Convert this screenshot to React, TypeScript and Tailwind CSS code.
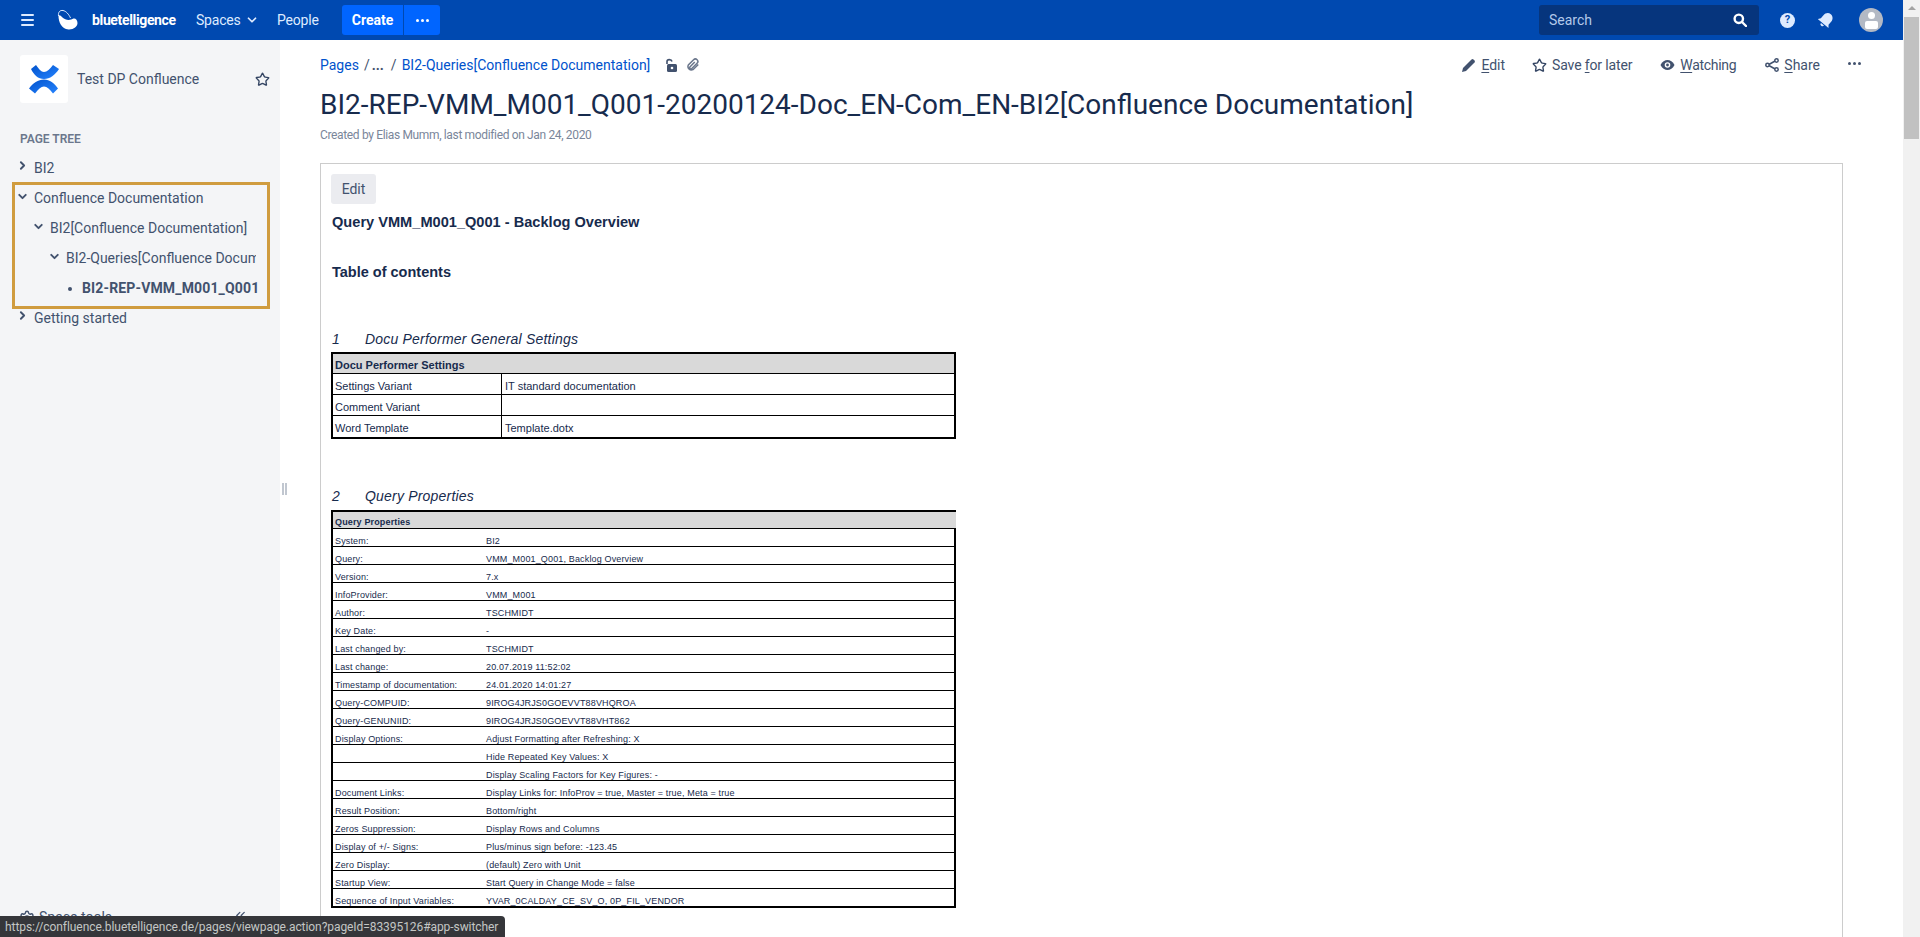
import React from "react";
import { ChevronRight, ChevronDown, ChevronsLeft, Star, Settings } from "lucide-react";

const t2: [string, string][] = [
  ["System:", "BI2"],
  ["Query:", "VMM_M001_Q001, Backlog Overview"],
  ["Version:", "7.x"],
  ["InfoProvider:", "VMM_M001"],
  ["Author:", "TSCHMIDT"],
  ["Key Date:", "-"],
  ["Last changed by:", "TSCHMIDT"],
  ["Last change:", "20.07.2019 11:52:02"],
  ["Timestamp of documentation:", "24.01.2020 14:01:27"],
  ["Query-COMPUID:", "9IROG4JRJS0GOEVVT88VHQROA"],
  ["Query-GENUNIID:", "9IROG4JRJS0GOEVVT88VHT862"],
  ["Display Options:", "Adjust Formatting after Refreshing: X"],
  ["", "Hide Repeated Key Values: X"],
  ["", "Display Scaling Factors for Key Figures: -"],
  ["Document Links:", "Display Links for: InfoProv = true, Master = true, Meta = true"],
  ["Result Position:", "Bottom/right"],
  ["Zeros Suppression:", "Display Rows and Columns"],
  ["Display of +/- Signs:", "Plus/minus sign before: -123.45"],
  ["Zero Display:", "(default) Zero with Unit"],
  ["Startup View:", "Start Query in Change Mode = false"],
  ["Sequence of Input Variables:", "YVAR_0CALDAY_CE_SV_O, 0P_FIL_VENDOR"],
];

function Action({ icon, u, rest, pre = "", className = "", textClass = "" }: { icon: React.ReactNode; u: string; rest: string; pre?: string; className?: string; textClass?: string }) {
  return (
    <div className={"flex items-center " + className}>
      {icon}
      <span className={"ml-[5px] text-[14px] text-[#42526e] " + textClass}>
        {pre}
        <span className="underline underline-offset-2">{u}</span>
        {rest}
      </span>
    </div>
  );
}

function TreeRow({ pl, text, open, bold }: { pl: number; text: string; open?: boolean; bold?: boolean }) {
  return (
    <div className="h-[30px] flex items-center relative shrink-0" style={{ paddingLeft: pl }}>
      {bold ? (
        <span className="w-[4px] h-[4px] shrink-0 rounded-full bg-[#42526e] ml-[-14px] mr-[10px]" />
      ) : open ? (
        <ChevronDown size={13} strokeWidth={3.5} className="shrink-0 text-[#42526e] ml-[-18px] mr-[5px] mt-[-5px]" />
      ) : (
        <ChevronRight size={13} strokeWidth={3.5} className="shrink-0 text-[#42526e] ml-[-18px] mr-[5px] mt-[-5px]" />
      )}
      <span className={"text-[14px] whitespace-nowrap text-[#42526e] " + (bold ? "font-bold tracking-[0.15px]" : "")}>{text}</span>
    </div>
  );
}

export default function App() {
  return (
    <div className="relative h-[937px] w-[1920px] overflow-hidden flex bg-white font-['Roboto',sans-serif]">
      <div className="w-[1903px] flex flex-col">
        <header className="h-[40px] bg-[#0049b0] flex items-center shrink-0 text-[#deebff] text-[14px]">
          <svg width="14" height="12" viewBox="0 0 14 12" className="ml-[21px] shrink-0" fill="#deebff">
            <rect y="0" width="13" height="2" rx="1" />
            <rect y="5" width="13" height="2" rx="1" />
            <rect y="10" width="13" height="2" rx="1" />
          </svg>
          <svg width="22" height="22" viewBox="0 0 22 22" className="ml-[22px] shrink-0">
            <path d="M1.500 7c0 6 3 13 10 13.500 5 .3 9-3 9-6.500 0-3-2-5-4-4.500-3 2-8 2-11-1-1.500-1.500-3-3.500-4-1.500z" fill="#fff" />
            <path d="M1.500 7C1 3 3 1 6 1.500c3 .5 6 4 7.500 7.500" stroke="#deebff" strokeWidth="1" fill="none" />
          </svg>
          <span className="ml-[13px] w-[84px] font-bold text-white tracking-[-0.35px] whitespace-nowrap">bluetelligence</span>
          <span className="ml-[20px] w-[43px] tracking-[-0.2px]">Spaces</span>
          <ChevronDown size={14} strokeWidth={3} className="ml-[6px]" />
          <span className="ml-[18px] w-[41px] tracking-[-0.2px]">People</span>
          <div className="ml-[24px] flex h-[30px]">
            <div className="w-[61px] bg-[#0065ff] rounded-l-[3px] flex items-center justify-center font-bold text-white">Create</div>
            <div className="w-[36px] ml-px bg-[#0065ff] rounded-r-[3px] flex items-center justify-center gap-[2px]">
              <span className="w-[3px] h-[3px] rounded-full bg-white" />
              <span className="w-[3px] h-[3px] rounded-full bg-white" />
              <span className="w-[3px] h-[3px] rounded-full bg-white" />
            </div>
          </div>
          <div className="ml-auto w-[220px] h-[30px] rounded-[3px] bg-[#06357d] flex items-center pl-[10px] pr-[12px] justify-between">
            <span className="text-[#b3c9ea]">Search</span>
            <svg width="14" height="14" viewBox="0 0 14 14" fill="none" stroke="#fff" strokeWidth="2.400">
              <circle cx="5.800" cy="5.800" r="4.200" />
              <path d="M9 9l4 4" strokeLinecap="round" />
            </svg>
          </div>
          <div className="ml-[21px] w-[15px] h-[15px] rounded-full bg-[#deebff] flex items-center justify-center text-[11px] font-bold text-[#0049b0]">?</div>
          <svg width="16" height="16" viewBox="0 0 16 16" className="ml-[23px]" fill="#deebff">
            <g transform="rotate(40 8 8)">
              <path d="M8 0.500c-3 0-5 2.500-5 5.500v4L1 12.500h14L13 10V6c0-3-2-5.500-5-5.500z" />
              <path d="M6 13.500a2 2 0 0 0 4 0z" />
            </g>
          </svg>
          <div className="ml-[25px] mr-[20px] w-[24px] h-[24px] rounded-full bg-[#b3b9c4] relative overflow-hidden flex flex-col items-center">
            <span className="mt-[4px] w-[7px] h-[7px] rounded-full bg-white" />
            <span className="mt-[2px] w-[13px] h-[8px] rounded-[2px] bg-white" />
          </div>
        </header>
        <div className="flex flex-1 min-h-0">
          <aside className="relative w-[280px] bg-[#f4f5f7] shrink-0 pt-[15px] overflow-hidden">
            <div className="flex items-center pl-[20px] pr-[10px]">
              <div className="w-[48px] h-[48px] bg-white rounded-[3px] flex items-center justify-center">
                <svg width="32" height="33" viewBox="0 0 32 33">
                  <defs>
                    <linearGradient id="cg" x1="0" y1="0" x2="1" y2="1">
                      <stop offset="0" stopColor="#0052cc" />
                      <stop offset="1" stopColor="#2684ff" />
                    </linearGradient>
                  </defs>
                  <path d="M3 6 L8 2 C11 6 13 9 16 9 C19 9 22 6 25 2 L31 6 C27 12 22 16 16 16 C10 16 6 12 3 6Z" fill="url(#cg)" />
                  <path d="M1 25.500 C5 20 10 16.500 16 16.500 C22 16.500 26 20 30 25.500 L25 30.500 C22 26.500 19 23.500 16 23.500 C13 23.500 10 26.500 7 30.500Z" fill="url(#cg)" />
                </svg>
              </div>
              <span className="ml-[9px] text-[14px] text-[#42526e]">Test DP Confluence</span>
              <Star size={15} strokeWidth={2.200} className="ml-auto text-[#344563]" />
            </div>
            <div className="ml-[20px] mt-[27px] text-[12px] font-semibold text-[#6b778c] leading-[18px]">PAGE TREE</div>
            <div className="mt-[5px]">
              <TreeRow pl={34} text="BI2" />
              <div className="border-[3px] border-[#d09c3f] ml-[12px] w-[258px] h-[127px] mt-[-1px] overflow-hidden mb-[-6px]">
                <div className="ml-[-15px] w-[270px] mt-[-1.500px]">
                  <TreeRow pl={34} text="Confluence Documentation" open />
                  <TreeRow pl={50} text="BI2[Confluence Documentation]" open />
                  <div className="w-[256px] overflow-hidden">
                    <TreeRow pl={66} text="BI2-Queries[Confluence Documentation]" open />
                  </div>
                  <TreeRow pl={82} text="BI2-REP-VMM_M001_Q001" bold />
                </div>
              </div>
              <TreeRow pl={34} text="Getting started" />
            </div>
            <div className="absolute left-[19px] top-[867px] flex items-center text-[14px] text-[#42526e]">
              <Settings size={16} strokeWidth={2.200} />
              <span className="ml-[4px]">Space tools</span>
            </div>
            <ChevronsLeft size={15} strokeWidth={2} className="absolute left-[233px] top-[868px] text-[#42526e]" />
          </aside>
          <main className="relative flex-1 pl-[40px] pr-[60px] min-w-0">
            <div className="absolute left-[2px] top-[443px] flex gap-px">
              <span className="w-[2px] h-[12px] bg-[#c1c7d0]" />
              <span className="w-[2px] h-[12px] bg-[#c1c7d0]" />
            </div>
            <div className="flex items-center h-[20px] mt-[15px] text-[14px]">
              <span className="text-[#0052cc]">Pages</span>
              <span className="ml-[5px] text-[#42526e]">/</span>
              <span className="ml-[2px] font-bold text-[#42526e]">...</span>
              <span className="ml-[7px] text-[#42526e]">/</span>
              <span className="ml-[5px] text-[#0052cc]">BI2-Queries[Confluence Documentation]</span>
              <svg width="13" height="15" viewBox="0 0 13 15" className="ml-[15px] shrink-0" fill="none">
                <path d="M2 6V3.500C2 1 6.500 1 7 3.500" stroke="#42526e" strokeWidth="1.600" />
                <rect x="2" y="6" width="10" height="8" rx="1.500" fill="#42526e" />
                <circle cx="7" cy="10" r="1.300" fill="#fff" />
              </svg>
              <svg width="14" height="14" viewBox="0 0 24 24" fill="none" stroke="#6b778c" strokeWidth="2.600" className="ml-[8px] shrink-0">
                <path d="M21 11l-9 9a6 6 0 0 1-8-8l9-9a4 4 0 0 1 6 6l-9 9a2 2 0 0 1-3-3l8-8" />
              </svg>
              <div className="ml-auto flex items-center mr-[-18px]">
                <Action
                  icon={
                    <svg width="15" height="15" viewBox="0 0 15 15" fill="#42526e">
                      <path d="M10.500 1.500a1.500 1.500 0 0 1 2 0l1 1a1.500 1.500 0 0 1 0 2L5 13l-4 1 1-4z" />
                    </svg>
                  }
                  u="E"
                  rest="dit"
                />
                <Action className="ml-[27px]" textClass="tracking-[-0.15px]" icon={<Star size={15} strokeWidth={2.200} className="text-[#344563]" />} pre="Save " u="f" rest="or later" />
                <Action
                  className="ml-[28px]"
                  textClass="tracking-[-0.3px]"
                  icon={
                    <svg width="15" height="15" viewBox="0 0 15 15">
                      <path d="M0.500 7C2 3.500 5 2 7.500 2s5.500 1.500 7 5c-1.500 3.500-4.500 5-7 5s-5.500-1.500-7-5z" fill="#42526e" />
                      <circle cx="7.500" cy="7" r="2.800" fill="#fff" />
                      <circle cx="7.500" cy="7" r="1.400" fill="#42526e" />
                    </svg>
                  }
                  u="W"
                  rest="atching"
                />
                <Action
                  className="ml-[29px]"
                  icon={
                    <svg width="14" height="14" viewBox="0 0 14 14" fill="#fff" stroke="#42526e" strokeWidth="1.500">
                      <path d="M3 7l8-4.500M3 7l8 4.500" fill="none" />
                      <circle cx="2.500" cy="7" r="1.700" />
                      <circle cx="11.500" cy="2.500" r="1.700" />
                      <circle cx="11.500" cy="11.500" r="1.700" />
                    </svg>
                  }
                  u="S"
                  rest="hare"
                />
                <div className="ml-[28px] flex gap-[2px] mt-[-3px]">
                  <span className="w-[3px] h-[3px] rounded-full bg-[#42526e]" />
                  <span className="w-[3px] h-[3px] rounded-full bg-[#42526e]" />
                  <span className="w-[3px] h-[3px] rounded-full bg-[#42526e]" />
                </div>
              </div>
            </div>
            <h1 className="mt-[10px] text-[28px] leading-[40px] text-[#172b4d] whitespace-nowrap font-normal">BI2-REP-VMM_M001_Q001-20200124-Doc_EN-Com_EN-BI2[Confluence Documentation]</h1>
            <div className="mt-[2px] text-[12px] tracking-[-0.35px] leading-[16px] text-[#7a869a]">Created by Elias Mumm, last modified on Jan 24, 2020</div>
            <div className="mt-[20px] border border-[#cccccc] h-[900px] pl-[10px] pt-[10px] font-['Liberation_Sans',sans-serif] text-[#172b4d]">
              <div className="w-[45px] h-[30px] rounded-[3px] bg-[#ebecf0] flex items-center justify-center text-[14px] text-[#42526e] font-['Roboto',sans-serif]">Edit</div>
              <div className="mt-[10px] ml-px text-[14.600px] leading-[16px] font-bold">Query VMM_M001_Q001 - Backlog Overview</div>
              <div className="mt-[34px] ml-px text-[14.500px] leading-[16px] font-bold">Table of contents</div>
              <div className="mt-[50px] ml-px flex text-[14px] tracking-[0.2px] italic leading-[18px]">
                <span className="w-[33px]">1</span>
                <span>Docu Performer General Settings</span>
              </div>
              <div className="mt-[4px] w-[625px] border-2 border-black text-[11px] text-[#172b4d]">
                <div className="bg-[#d9d9d9] h-[20px] pl-[2px] leading-[23px] font-bold border-b border-black">Docu Performer Settings</div>
                {[
                  ["Settings Variant", "IT standard documentation"],
                  ["Comment Variant", ""],
                  ["Word Template", "Template.dotx"],
                ].map(([a, b], i) => (
                  <div key={a} className={"flex h-[21px] leading-[25px] " + (i < 2 ? "border-b border-black" : "")}>
                    <div className="w-[169px] pl-[2px] border-r border-black">{a}</div>
                    <div className="pl-[3px]">{b}</div>
                  </div>
                ))}
              </div>
              <div className="mt-[48px] ml-px flex text-[14px] tracking-[0.2px] italic leading-[18px]">
                <span className="w-[33px]">2</span>
                <span>Query Properties</span>
              </div>
              <div className="mt-[5px] w-[625px] text-[9px] tracking-[0.15px] text-[#172b4d]">
                <div className="bg-[#d9d9d9] h-[18px] pl-[2px] leading-[21px] font-bold border-t-2 border-l-2 border-black">Query Properties</div>
                <div className="border-2 border-black border-t-1">
                  {t2.map(([a, b], i) => (
                    <div key={i} className={"flex leading-[24px] " + (i < t2.length - 1 ? "h-[18px] border-b border-black" : "h-[17px]")}>
                      <div className="w-[153px] pl-[2px]">{a}</div>
                      <div>{b}</div>
                    </div>
                  ))}
                </div>
              </div>
            </div>
          </main>
        </div>
      </div>
      <div className="w-[17px] bg-[#f1f1f1] flex flex-col items-center shrink-0">
        <div className="mt-[6px] w-0 h-0 border-x-[4px] border-x-transparent border-b-[4px] border-b-[#a3a3a3]" />
        <div className="mt-[7px] w-[15px] h-[122px] bg-[#c1c1c1]" />
      </div>
      <div className="absolute left-0 bottom-0 w-[505px] h-[21px] bg-[#35363a] rounded-tr-[4px] flex items-center pl-[5px] text-[12px] tracking-[-0.07px] text-[#c4c7c5] font-['Roboto',sans-serif] whitespace-nowrap">https://confluence.bluetelligence.de/pages/viewpage.action?pageId=83395126#app-switcher</div>
    </div>
  );
}
